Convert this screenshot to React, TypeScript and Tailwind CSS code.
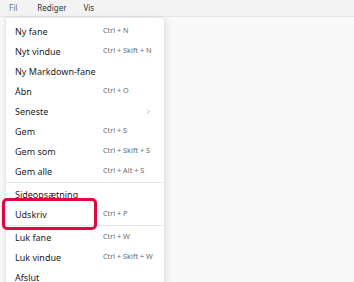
import { ChevronRight } from "lucide-react";

type Item = { label: string; shortcut?: string; submenu?: boolean };

const groups: Item[][] = [
  [
    { label: "Ny fane", shortcut: "Ctrl + N" },
    { label: "Nyt vindue", shortcut: "Ctrl + Skift + N" },
    { label: "Ny Markdown-fane" },
    { label: "Åbn", shortcut: "Ctrl + O" },
    { label: "Seneste", submenu: true },
    { label: "Gem", shortcut: "Ctrl + S" },
    { label: "Gem som", shortcut: "Ctrl + Skift + S" },
    { label: "Gem alle", shortcut: "Ctrl + Alt + S" },
  ],
  [
    { label: "Sideopsætning" },
    { label: "Udskriv", shortcut: "Ctrl + P" },
  ],
  [
    { label: "Luk fane", shortcut: "Ctrl + W" },
    { label: "Luk vindue", shortcut: "Ctrl + Skift + W" },
    { label: "Afslut" },
  ],
];

const App = () => {
  return (
    <div
      className="relative w-[354px] h-[282px] overflow-hidden bg-[#f9f9f9] text-[#1b1b1b]"
      style={{ fontFamily: '"Noto Sans", "Open Sans", sans-serif' }}
    >
      {/* menu bar */}
      <div className="flex items-center h-[17px] bg-[#f3f3f3] border-b border-[#e5e5e5] text-[8px] pl-[9px]">
        <span className="text-[#6e6e6e] mr-[20px]">Fil</span>
        <span className="text-[#333] mr-[17px]">Rediger</span>
        <span className="text-[#333]">Vis</span>
      </div>

      {/* file menu */}
      <div className="absolute left-[5px] top-[17px] w-[160px] pt-[3px] bg-white rounded-br-[5px] rounded-tr-[5px] border border-[#e6e6e6] shadow-[1px_2px_6px_rgba(0,0,0,0.12)]">
        {groups.map((group, gi) => (
          <div key={gi}>
            {gi > 0 && (
              <div className="py-[1px]">
                <div className="h-px bg-[#e8e8e8]" />
              </div>
            )}
            {group.map((item) => (
              <div key={item.label} className="flex items-center h-[20px] pl-[9px] pr-[8px] whitespace-nowrap">
                <span className="w-[88px] shrink-0 text-[9px] leading-none">{item.label}</span>
                {item.shortcut && (
                  <span className="text-[7.3px] text-[#6a6a6a] leading-none">{item.shortcut}</span>
                )}
                {item.submenu && (
                  <ChevronRight className="ml-auto mr-[4px] w-[7px] h-[7px] text-[#8a8a8a]" strokeWidth={2} />
                )}
              </div>
            ))}
          </div>
        ))}
      </div>

      {/* highlight around Udskriv */}
      <div className="absolute left-[2px] top-[198px] w-[95px] h-[32px] border-[3px] border-[#e0063f] rounded-[5px]" />
    </div>
  );
};

export default App;
